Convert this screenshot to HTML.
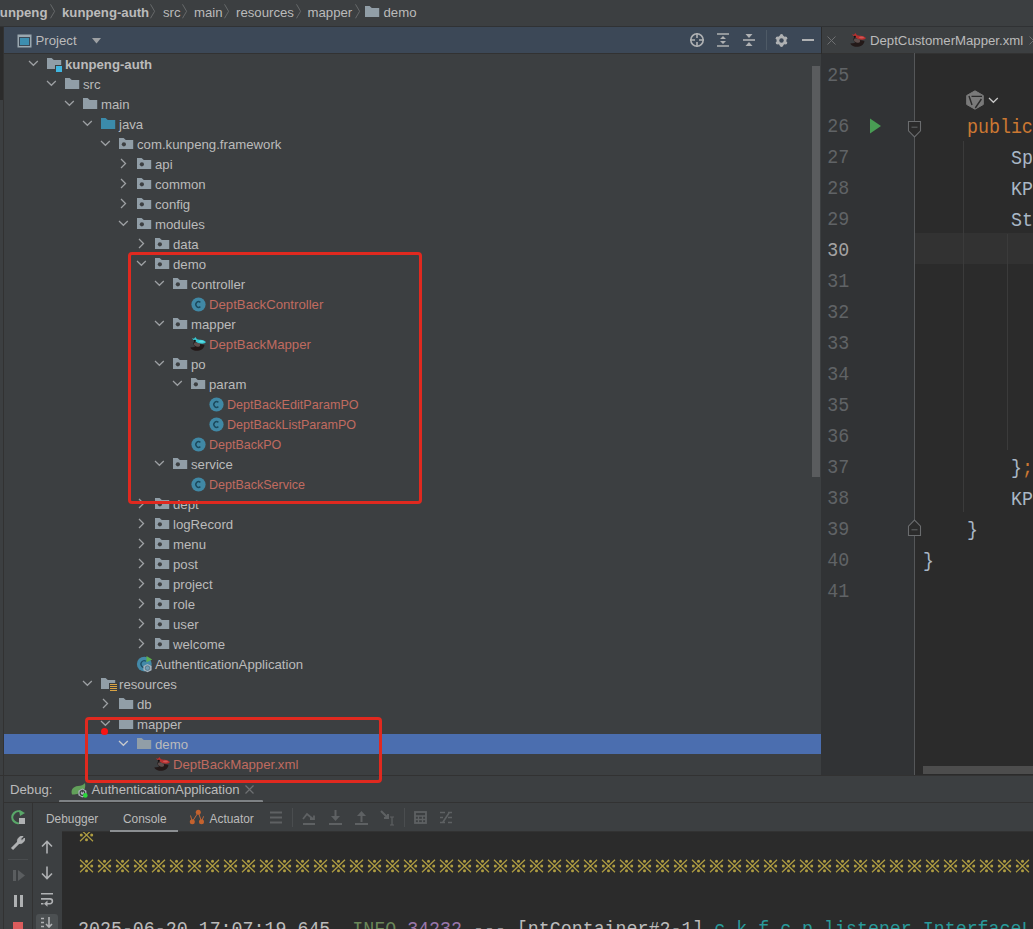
<!DOCTYPE html>
<html><head><meta charset="utf-8"><style>
html,body{margin:0;padding:0;width:1033px;height:929px;overflow:hidden;background:#3C3F41;position:relative;font-family:"Liberation Sans",sans-serif}
div{box-sizing:border-box}
.t{position:absolute;height:20px;line-height:20px;font-size:13.2px;white-space:nowrap}
.ln{position:absolute;left:827.3px;height:31px;line-height:31px;font-family:"Liberation Mono",monospace;font-size:18.3px;white-space:nowrap;transform:translateY(2.8px) scaleY(1.08)}
.code{position:absolute;height:31px;line-height:31px;font-family:"Liberation Mono",monospace;font-size:18.3px;color:#A9B7C6;white-space:pre;transform:translateY(3.3px) scaleY(1.08)}
.bc{position:absolute;top:-0.5px;height:26px;line-height:26px;font-size:13.2px;color:#BBBBBB;white-space:nowrap}
</style></head><body>
<!-- breadcrumb bar -->
<div style="position:absolute;left:0;top:0;width:1033px;height:26px;background:#3C3F41"></div>
<div style="position:absolute;left:0;top:26px;width:1033px;height:1px;background:#303234"></div>
<div class="bc" style="left:-7.5px;font-weight:bold">kunpeng</div>
<div class="bc" style="left:62px;font-weight:bold">kunpeng-auth</div>
<div class="bc" style="left:163px">src</div>
<div class="bc" style="left:194px">main</div>
<div class="bc" style="left:236px">resources</div>
<div class="bc" style="left:307.5px">mapper</div>
<div class="bc" style="left:383.5px">demo</div>
<svg style="position:absolute;left:49.5px;top:4px" width="6" height="15" viewBox="0 0 6 15"><path d="M0.5 0.3L4.6 7.3L0.5 14.3" fill="none" stroke="#67696B" stroke-width="1"/></svg>
<svg style="position:absolute;left:149.5px;top:4px" width="6" height="15" viewBox="0 0 6 15"><path d="M0.5 0.3L4.6 7.3L0.5 14.3" fill="none" stroke="#67696B" stroke-width="1"/></svg>
<svg style="position:absolute;left:182px;top:4px" width="6" height="15" viewBox="0 0 6 15"><path d="M0.5 0.3L4.6 7.3L0.5 14.3" fill="none" stroke="#67696B" stroke-width="1"/></svg>
<svg style="position:absolute;left:224px;top:4px" width="6" height="15" viewBox="0 0 6 15"><path d="M0.5 0.3L4.6 7.3L0.5 14.3" fill="none" stroke="#67696B" stroke-width="1"/></svg>
<svg style="position:absolute;left:295.5px;top:4px" width="6" height="15" viewBox="0 0 6 15"><path d="M0.5 0.3L4.6 7.3L0.5 14.3" fill="none" stroke="#67696B" stroke-width="1"/></svg>
<svg style="position:absolute;left:354.5px;top:4px" width="6" height="15" viewBox="0 0 6 15"><path d="M0.5 0.3L4.6 7.3L0.5 14.3" fill="none" stroke="#67696B" stroke-width="1"/></svg>
<svg style="position:absolute;left:365px;top:5.5px" width="16" height="13" viewBox="0 0 16 13"><path d="M0 0H4.6L6.8 2H14.2V11H0Z" fill="#919EA7"/></svg>
<!-- left stripe -->
<div style="position:absolute;left:0;top:27px;width:3px;height:73px;background:#2B2B2B"></div>
<div style="position:absolute;left:3px;top:27px;width:1px;height:902px;background:#323232"></div>
<!-- tool window -->
<div style="position:absolute;left:4px;top:27px;width:817px;height:26px;background:#3C4857"></div>
<div style="position:absolute;left:4px;top:53px;width:817px;height:1px;background:#323232"></div>
<div style="position:absolute;left:4px;top:54px;width:817px;height:721px;background:#3C3F41"></div>
<svg style="position:absolute;left:17px;top:34px" width="15" height="14" viewBox="0 0 15 14"><rect x="0.5" y="0.5" width="14" height="13" fill="#9AA7B0"/><rect x="2" y="3" width="11" height="9" fill="#3C4A58"/><rect x="3" y="4" width="9" height="7" fill="#3D8EB0"/></svg>
<div class="t" style="left:35.5px;top:31px;color:#BBBBBB">Project</div>
<svg style="position:absolute;left:92px;top:38px" width="9" height="6" viewBox="0 0 9 6"><path d="M0 0H9L4.5 5.5Z" fill="#9DA0A3"/></svg>
<svg style="position:absolute;left:689px;top:32px" width="16" height="16" viewBox="0 0 16 16"><circle cx="8" cy="8" r="6.2" fill="none" stroke="#AFB1B3" stroke-width="1.6"/><path d="M8 1V6M8 10V15M1 8H6M10 8H15" stroke="#AFB1B3" stroke-width="1.6"/></svg>
<svg style="position:absolute;left:716px;top:32px" width="14" height="16" viewBox="0 0 14 16"><path d="M1 2H13M1 14H13" stroke="#AFB1B3" stroke-width="1.6"/><path d="M4 7H10L7 4Z M4 9H10L7 12Z" fill="#AFB1B3"/></svg>
<svg style="position:absolute;left:742px;top:33px" width="14" height="14" viewBox="0 0 14 14"><path d="M1 7H13" stroke="#AFB1B3" stroke-width="1.6"/><path d="M3.5 1H10.5L7 5Z M3.5 13H10.5L7 9Z" fill="#AFB1B3"/></svg>
<div style="position:absolute;left:765.5px;top:30px;width:1px;height:20px;background:#4E5A66"></div>
<svg style="position:absolute;left:774px;top:32.9px" width="15" height="15" viewBox="0 0 15 15"><g transform="translate(7.5 7.5)"><circle r="4.9" fill="#AFB1B3"/><circle cx="0.00" cy="-4.70" r="1.7" fill="#AFB1B3"/><circle cx="4.07" cy="-2.35" r="1.7" fill="#AFB1B3"/><circle cx="4.07" cy="2.35" r="1.7" fill="#AFB1B3"/><circle cx="0.00" cy="4.70" r="1.7" fill="#AFB1B3"/><circle cx="-4.07" cy="2.35" r="1.7" fill="#AFB1B3"/><circle cx="-4.07" cy="-2.35" r="1.7" fill="#AFB1B3"/><circle r="2.2" fill="#3C4857"/></g></svg>
<div style="position:absolute;left:802px;top:38.5px;width:12px;height:2.5px;background:#AFB1B3"></div>
<svg style="position:absolute;left:28.1px;top:60px" width="11" height="7" viewBox="0 0 11 7"><path d="M1 1L5.4 5.3L9.8 1" fill="none" stroke="#9DA0A3" stroke-width="1.25"/></svg>
<svg style="position:absolute;left:47px;top:58px" width="16" height="13" viewBox="0 0 16 13"><path d="M0 0H4.6L6.8 2H14.2V11H0Z" fill="#919EA7"/></svg>
<div style="position:absolute;left:55px;top:65px;width:7px;height:7px;background:#3C3F41"></div>
<div style="position:absolute;left:56px;top:66px;width:6px;height:6px;background:#40B6E0"></div>
<div class="t" style="left:65px;top:55px;color:#BBBBBB;font-weight:bold">kunpeng-auth</div>
<svg style="position:absolute;left:46.1px;top:80px" width="11" height="7" viewBox="0 0 11 7"><path d="M1 1L5.4 5.3L9.8 1" fill="none" stroke="#9DA0A3" stroke-width="1.25"/></svg>
<svg style="position:absolute;left:65px;top:78px" width="16" height="13" viewBox="0 0 16 13"><path d="M0 0H4.6L6.8 2H14.2V11H0Z" fill="#919EA7"/></svg>
<div class="t" style="left:83px;top:75px;color:#BBBBBB;font-weight:normal">src</div>
<svg style="position:absolute;left:64.1px;top:100px" width="11" height="7" viewBox="0 0 11 7"><path d="M1 1L5.4 5.3L9.8 1" fill="none" stroke="#9DA0A3" stroke-width="1.25"/></svg>
<svg style="position:absolute;left:83px;top:98px" width="16" height="13" viewBox="0 0 16 13"><path d="M0 0H4.6L6.8 2H14.2V11H0Z" fill="#919EA7"/></svg>
<div class="t" style="left:101px;top:95px;color:#BBBBBB;font-weight:normal">main</div>
<svg style="position:absolute;left:82.1px;top:120px" width="11" height="7" viewBox="0 0 11 7"><path d="M1 1L5.4 5.3L9.8 1" fill="none" stroke="#9DA0A3" stroke-width="1.25"/></svg>
<svg style="position:absolute;left:101px;top:118px" width="16" height="13" viewBox="0 0 16 13"><path d="M0 0H4.6L6.8 2H14.2V11H0Z" fill="#3B8BAB"/></svg>
<div class="t" style="left:119px;top:115px;color:#BBBBBB;font-weight:normal">java</div>
<svg style="position:absolute;left:100.1px;top:140px" width="11" height="7" viewBox="0 0 11 7"><path d="M1 1L5.4 5.3L9.8 1" fill="none" stroke="#9DA0A3" stroke-width="1.25"/></svg>
<svg style="position:absolute;left:119px;top:138px" width="16" height="13" viewBox="0 0 16 13"><path d="M0 0H4.6L6.8 2H14.2V11H0Z" fill="#919EA7"/><circle cx="4.9" cy="6.3" r="2.1" fill="#3C3F41"/></svg>
<div class="t" style="left:137px;top:135px;color:#BBBBBB;font-weight:normal">com.kunpeng.framework</div>
<svg style="position:absolute;left:119.5px;top:157.8px" width="7" height="11" viewBox="0 0 7 11"><path d="M1 1L5.5 5.5L1 10" fill="none" stroke="#9DA0A3" stroke-width="1.3"/></svg>
<svg style="position:absolute;left:137px;top:158px" width="16" height="13" viewBox="0 0 16 13"><path d="M0 0H4.6L6.8 2H14.2V11H0Z" fill="#919EA7"/><circle cx="4.9" cy="6.3" r="2.1" fill="#3C3F41"/></svg>
<div class="t" style="left:155px;top:155px;color:#BBBBBB;font-weight:normal">api</div>
<svg style="position:absolute;left:119.5px;top:177.8px" width="7" height="11" viewBox="0 0 7 11"><path d="M1 1L5.5 5.5L1 10" fill="none" stroke="#9DA0A3" stroke-width="1.3"/></svg>
<svg style="position:absolute;left:137px;top:178px" width="16" height="13" viewBox="0 0 16 13"><path d="M0 0H4.6L6.8 2H14.2V11H0Z" fill="#919EA7"/><circle cx="4.9" cy="6.3" r="2.1" fill="#3C3F41"/></svg>
<div class="t" style="left:155px;top:175px;color:#BBBBBB;font-weight:normal">common</div>
<svg style="position:absolute;left:119.5px;top:197.8px" width="7" height="11" viewBox="0 0 7 11"><path d="M1 1L5.5 5.5L1 10" fill="none" stroke="#9DA0A3" stroke-width="1.3"/></svg>
<svg style="position:absolute;left:137px;top:198px" width="16" height="13" viewBox="0 0 16 13"><path d="M0 0H4.6L6.8 2H14.2V11H0Z" fill="#919EA7"/><circle cx="4.9" cy="6.3" r="2.1" fill="#3C3F41"/></svg>
<div class="t" style="left:155px;top:195px;color:#BBBBBB;font-weight:normal">config</div>
<svg style="position:absolute;left:118.1px;top:220px" width="11" height="7" viewBox="0 0 11 7"><path d="M1 1L5.4 5.3L9.8 1" fill="none" stroke="#9DA0A3" stroke-width="1.25"/></svg>
<svg style="position:absolute;left:137px;top:218px" width="16" height="13" viewBox="0 0 16 13"><path d="M0 0H4.6L6.8 2H14.2V11H0Z" fill="#919EA7"/><circle cx="4.9" cy="6.3" r="2.1" fill="#3C3F41"/></svg>
<div class="t" style="left:155px;top:215px;color:#BBBBBB;font-weight:normal">modules</div>
<svg style="position:absolute;left:137.5px;top:237.8px" width="7" height="11" viewBox="0 0 7 11"><path d="M1 1L5.5 5.5L1 10" fill="none" stroke="#9DA0A3" stroke-width="1.3"/></svg>
<svg style="position:absolute;left:155px;top:238px" width="16" height="13" viewBox="0 0 16 13"><path d="M0 0H4.6L6.8 2H14.2V11H0Z" fill="#919EA7"/><circle cx="4.9" cy="6.3" r="2.1" fill="#3C3F41"/></svg>
<div class="t" style="left:173px;top:235px;color:#BBBBBB;font-weight:normal">data</div>
<svg style="position:absolute;left:136.1px;top:260px" width="11" height="7" viewBox="0 0 11 7"><path d="M1 1L5.4 5.3L9.8 1" fill="none" stroke="#9DA0A3" stroke-width="1.25"/></svg>
<svg style="position:absolute;left:155px;top:258px" width="16" height="13" viewBox="0 0 16 13"><path d="M0 0H4.6L6.8 2H14.2V11H0Z" fill="#919EA7"/><circle cx="4.9" cy="6.3" r="2.1" fill="#3C3F41"/></svg>
<div class="t" style="left:173px;top:255px;color:#BBBBBB;font-weight:normal">demo</div>
<svg style="position:absolute;left:154.1px;top:280px" width="11" height="7" viewBox="0 0 11 7"><path d="M1 1L5.4 5.3L9.8 1" fill="none" stroke="#9DA0A3" stroke-width="1.25"/></svg>
<svg style="position:absolute;left:173px;top:278px" width="16" height="13" viewBox="0 0 16 13"><path d="M0 0H4.6L6.8 2H14.2V11H0Z" fill="#919EA7"/><circle cx="4.9" cy="6.3" r="2.1" fill="#3C3F41"/></svg>
<div class="t" style="left:191px;top:275px;color:#BBBBBB;font-weight:normal">controller</div>
<svg style="position:absolute;left:190.5px;top:296.5px" width="15" height="15" viewBox="0 0 15 15"><circle cx="7.5" cy="7.5" r="7.1" fill="#4088A5"/><path d="M9.4 5.3A2.8 2.8 0 1 0 9.4 9.7" fill="none" stroke="#1B4A5E" stroke-width="1.5"/></svg>
<div class="t" style="left:209px;top:295px;color:#C06B60;font-weight:normal">DeptBackController</div>
<svg style="position:absolute;left:154.1px;top:320px" width="11" height="7" viewBox="0 0 11 7"><path d="M1 1L5.4 5.3L9.8 1" fill="none" stroke="#9DA0A3" stroke-width="1.25"/></svg>
<svg style="position:absolute;left:173px;top:318px" width="16" height="13" viewBox="0 0 16 13"><path d="M0 0H4.6L6.8 2H14.2V11H0Z" fill="#919EA7"/><circle cx="4.9" cy="6.3" r="2.1" fill="#3C3F41"/></svg>
<div class="t" style="left:191px;top:315px;color:#BBBBBB;font-weight:normal">mapper</div>
<svg style="position:absolute;left:189px;top:334px" width="18" height="20" viewBox="0 0 18 20"><path d="M1.2 13.4C2.5 15.5 5 16.9 9 16.8C13 16.5 15.4 13.5 15.4 11C13 10.5 10.5 10 8.5 9C7 8.5 5.5 8 4.5 8.3C4 10 4.8 11.5 6.5 12.5C5 13 3 13.5 1.2 13.4Z" fill="#231918"/><ellipse cx="8" cy="10.6" rx="3.2" ry="1.9" transform="rotate(20 8 10.6)" fill="#5E4E4C"/><path d="M2.8 4.2L5 4.8L6.3 2.9L8 5.2C11 5.8 15.5 5.8 16.8 8C16.5 9.8 13 10 10 9.2C7.5 8.5 5 6.5 2.8 4.2Z" fill="#36C9D3"/><ellipse cx="12.5" cy="7.6" rx="2.5" ry="1" fill="#7FE8EE" opacity="0.6"/><circle cx="5.8" cy="6.8" r="1.1" fill="#111"/></svg>
<div class="t" style="left:209px;top:335px;color:#C06B60;font-weight:normal">DeptBackMapper</div>
<svg style="position:absolute;left:154.1px;top:360px" width="11" height="7" viewBox="0 0 11 7"><path d="M1 1L5.4 5.3L9.8 1" fill="none" stroke="#9DA0A3" stroke-width="1.25"/></svg>
<svg style="position:absolute;left:173px;top:358px" width="16" height="13" viewBox="0 0 16 13"><path d="M0 0H4.6L6.8 2H14.2V11H0Z" fill="#919EA7"/><circle cx="4.9" cy="6.3" r="2.1" fill="#3C3F41"/></svg>
<div class="t" style="left:191px;top:355px;color:#BBBBBB;font-weight:normal">po</div>
<svg style="position:absolute;left:172.1px;top:380px" width="11" height="7" viewBox="0 0 11 7"><path d="M1 1L5.4 5.3L9.8 1" fill="none" stroke="#9DA0A3" stroke-width="1.25"/></svg>
<svg style="position:absolute;left:191px;top:378px" width="16" height="13" viewBox="0 0 16 13"><path d="M0 0H4.6L6.8 2H14.2V11H0Z" fill="#919EA7"/><circle cx="4.9" cy="6.3" r="2.1" fill="#3C3F41"/></svg>
<div class="t" style="left:209px;top:375px;color:#BBBBBB;font-weight:normal">param</div>
<svg style="position:absolute;left:208.5px;top:396.5px" width="15" height="15" viewBox="0 0 15 15"><circle cx="7.5" cy="7.5" r="7.1" fill="#4088A5"/><path d="M9.4 5.3A2.8 2.8 0 1 0 9.4 9.7" fill="none" stroke="#1B4A5E" stroke-width="1.5"/></svg>
<div class="t" style="left:227px;top:395px;color:#C06B60;font-weight:normal;transform:scaleX(0.955);transform-origin:0 0">DeptBackEditParamPO</div>
<svg style="position:absolute;left:208.5px;top:416.5px" width="15" height="15" viewBox="0 0 15 15"><circle cx="7.5" cy="7.5" r="7.1" fill="#4088A5"/><path d="M9.4 5.3A2.8 2.8 0 1 0 9.4 9.7" fill="none" stroke="#1B4A5E" stroke-width="1.5"/></svg>
<div class="t" style="left:227px;top:415px;color:#C06B60;font-weight:normal;transform:scaleX(0.952);transform-origin:0 0">DeptBackListParamPO</div>
<svg style="position:absolute;left:190.5px;top:436.5px" width="15" height="15" viewBox="0 0 15 15"><circle cx="7.5" cy="7.5" r="7.1" fill="#4088A5"/><path d="M9.4 5.3A2.8 2.8 0 1 0 9.4 9.7" fill="none" stroke="#1B4A5E" stroke-width="1.5"/></svg>
<div class="t" style="left:209px;top:435px;color:#C06B60;font-weight:normal;transform:scaleX(0.949);transform-origin:0 0">DeptBackPO</div>
<svg style="position:absolute;left:154.1px;top:460px" width="11" height="7" viewBox="0 0 11 7"><path d="M1 1L5.4 5.3L9.8 1" fill="none" stroke="#9DA0A3" stroke-width="1.25"/></svg>
<svg style="position:absolute;left:173px;top:458px" width="16" height="13" viewBox="0 0 16 13"><path d="M0 0H4.6L6.8 2H14.2V11H0Z" fill="#919EA7"/><circle cx="4.9" cy="6.3" r="2.1" fill="#3C3F41"/></svg>
<div class="t" style="left:191px;top:455px;color:#BBBBBB;font-weight:normal">service</div>
<svg style="position:absolute;left:190.5px;top:476.5px" width="15" height="15" viewBox="0 0 15 15"><circle cx="7.5" cy="7.5" r="7.1" fill="#4088A5"/><path d="M9.4 5.3A2.8 2.8 0 1 0 9.4 9.7" fill="none" stroke="#1B4A5E" stroke-width="1.5"/></svg>
<div class="t" style="left:209px;top:475px;color:#C06B60;font-weight:normal;transform:scaleX(0.949);transform-origin:0 0">DeptBackService</div>
<svg style="position:absolute;left:137.5px;top:497.8px" width="7" height="11" viewBox="0 0 7 11"><path d="M1 1L5.5 5.5L1 10" fill="none" stroke="#9DA0A3" stroke-width="1.3"/></svg>
<svg style="position:absolute;left:155px;top:498px" width="16" height="13" viewBox="0 0 16 13"><path d="M0 0H4.6L6.8 2H14.2V11H0Z" fill="#919EA7"/><circle cx="4.9" cy="6.3" r="2.1" fill="#3C3F41"/></svg>
<div class="t" style="left:173px;top:495px;color:#BBBBBB;font-weight:normal">dept</div>
<svg style="position:absolute;left:137.5px;top:517.8px" width="7" height="11" viewBox="0 0 7 11"><path d="M1 1L5.5 5.5L1 10" fill="none" stroke="#9DA0A3" stroke-width="1.3"/></svg>
<svg style="position:absolute;left:155px;top:518px" width="16" height="13" viewBox="0 0 16 13"><path d="M0 0H4.6L6.8 2H14.2V11H0Z" fill="#919EA7"/><circle cx="4.9" cy="6.3" r="2.1" fill="#3C3F41"/></svg>
<div class="t" style="left:173px;top:515px;color:#BBBBBB;font-weight:normal">logRecord</div>
<svg style="position:absolute;left:137.5px;top:537.8px" width="7" height="11" viewBox="0 0 7 11"><path d="M1 1L5.5 5.5L1 10" fill="none" stroke="#9DA0A3" stroke-width="1.3"/></svg>
<svg style="position:absolute;left:155px;top:538px" width="16" height="13" viewBox="0 0 16 13"><path d="M0 0H4.6L6.8 2H14.2V11H0Z" fill="#919EA7"/><circle cx="4.9" cy="6.3" r="2.1" fill="#3C3F41"/></svg>
<div class="t" style="left:173px;top:535px;color:#BBBBBB;font-weight:normal">menu</div>
<svg style="position:absolute;left:137.5px;top:557.8px" width="7" height="11" viewBox="0 0 7 11"><path d="M1 1L5.5 5.5L1 10" fill="none" stroke="#9DA0A3" stroke-width="1.3"/></svg>
<svg style="position:absolute;left:155px;top:558px" width="16" height="13" viewBox="0 0 16 13"><path d="M0 0H4.6L6.8 2H14.2V11H0Z" fill="#919EA7"/><circle cx="4.9" cy="6.3" r="2.1" fill="#3C3F41"/></svg>
<div class="t" style="left:173px;top:555px;color:#BBBBBB;font-weight:normal">post</div>
<svg style="position:absolute;left:137.5px;top:577.8px" width="7" height="11" viewBox="0 0 7 11"><path d="M1 1L5.5 5.5L1 10" fill="none" stroke="#9DA0A3" stroke-width="1.3"/></svg>
<svg style="position:absolute;left:155px;top:578px" width="16" height="13" viewBox="0 0 16 13"><path d="M0 0H4.6L6.8 2H14.2V11H0Z" fill="#919EA7"/><circle cx="4.9" cy="6.3" r="2.1" fill="#3C3F41"/></svg>
<div class="t" style="left:173px;top:575px;color:#BBBBBB;font-weight:normal">project</div>
<svg style="position:absolute;left:137.5px;top:597.8px" width="7" height="11" viewBox="0 0 7 11"><path d="M1 1L5.5 5.5L1 10" fill="none" stroke="#9DA0A3" stroke-width="1.3"/></svg>
<svg style="position:absolute;left:155px;top:598px" width="16" height="13" viewBox="0 0 16 13"><path d="M0 0H4.6L6.8 2H14.2V11H0Z" fill="#919EA7"/><circle cx="4.9" cy="6.3" r="2.1" fill="#3C3F41"/></svg>
<div class="t" style="left:173px;top:595px;color:#BBBBBB;font-weight:normal">role</div>
<svg style="position:absolute;left:137.5px;top:617.8px" width="7" height="11" viewBox="0 0 7 11"><path d="M1 1L5.5 5.5L1 10" fill="none" stroke="#9DA0A3" stroke-width="1.3"/></svg>
<svg style="position:absolute;left:155px;top:618px" width="16" height="13" viewBox="0 0 16 13"><path d="M0 0H4.6L6.8 2H14.2V11H0Z" fill="#919EA7"/><circle cx="4.9" cy="6.3" r="2.1" fill="#3C3F41"/></svg>
<div class="t" style="left:173px;top:615px;color:#BBBBBB;font-weight:normal">user</div>
<svg style="position:absolute;left:137.5px;top:637.8px" width="7" height="11" viewBox="0 0 7 11"><path d="M1 1L5.5 5.5L1 10" fill="none" stroke="#9DA0A3" stroke-width="1.3"/></svg>
<svg style="position:absolute;left:155px;top:638px" width="16" height="13" viewBox="0 0 16 13"><path d="M0 0H4.6L6.8 2H14.2V11H0Z" fill="#919EA7"/><circle cx="4.9" cy="6.3" r="2.1" fill="#3C3F41"/></svg>
<div class="t" style="left:173px;top:635px;color:#BBBBBB;font-weight:normal">welcome</div>
<svg style="position:absolute;left:132px;top:652px" width="26" height="24" viewBox="0 0 26 24"><circle cx="12.3" cy="12.1" r="7.4" fill="#4389A8"/><path d="M14 9.3A3.3 3.3 0 1 0 14 14.9" fill="none" stroke="#1D4F66" stroke-width="1.3"/><path d="M14.5 3.9L20.2 7.5L14.5 10.3Z" fill="#5DB04E"/><path d="M15.5 11.9L19.6 14V18.3L15.5 20.3L11.4 18.3V14Z" fill="#A5B3BF"/><circle cx="15.5" cy="16.1" r="2.3" fill="#6F9DB5" stroke="#4E6E80" stroke-width="0.8"/></svg>
<div class="t" style="left:155px;top:655px;color:#BBBBBB;font-weight:normal">AuthenticationApplication</div>
<svg style="position:absolute;left:82.1px;top:680px" width="11" height="7" viewBox="0 0 11 7"><path d="M1 1L5.4 5.3L9.8 1" fill="none" stroke="#9DA0A3" stroke-width="1.25"/></svg>
<svg style="position:absolute;left:101px;top:678px" width="16" height="13" viewBox="0 0 16 13"><path d="M0 0H4.6L6.8 2H14.2V11H0Z" fill="#919EA7"/></svg>
<div style="position:absolute;left:109px;top:683px;width:8px;height:9px;background:#3C3F41"></div>
<div style="position:absolute;left:110px;top:684px;width:7px;height:1px;background:#D9A343"></div>
<div style="position:absolute;left:110px;top:686px;width:7px;height:1px;background:#D9A343"></div>
<div style="position:absolute;left:110px;top:688px;width:7px;height:1px;background:#D9A343"></div>
<div style="position:absolute;left:110px;top:690px;width:7px;height:1px;background:#D9A343"></div>
<div class="t" style="left:119px;top:675px;color:#BBBBBB;font-weight:normal">resources</div>
<svg style="position:absolute;left:101.5px;top:697.8px" width="7" height="11" viewBox="0 0 7 11"><path d="M1 1L5.5 5.5L1 10" fill="none" stroke="#9DA0A3" stroke-width="1.3"/></svg>
<svg style="position:absolute;left:119px;top:698px" width="16" height="13" viewBox="0 0 16 13"><path d="M0 0H4.6L6.8 2H14.2V11H0Z" fill="#919EA7"/></svg>
<div class="t" style="left:137px;top:695px;color:#BBBBBB;font-weight:normal">db</div>
<svg style="position:absolute;left:100.1px;top:720px" width="11" height="7" viewBox="0 0 11 7"><path d="M1 1L5.4 5.3L9.8 1" fill="none" stroke="#9DA0A3" stroke-width="1.25"/></svg>
<svg style="position:absolute;left:119px;top:718px" width="16" height="13" viewBox="0 0 16 13"><path d="M0 0H4.6L6.8 2H14.2V11H0Z" fill="#919EA7"/></svg>
<div class="t" style="left:137px;top:715px;color:#BBBBBB;font-weight:normal">mapper</div>
<div style="position:absolute;left:4px;top:734px;width:817px;height:20px;background:#4B6EAF"></div>
<svg style="position:absolute;left:118.1px;top:740px" width="11" height="7" viewBox="0 0 11 7"><path d="M1 1L5.4 5.3L9.8 1" fill="none" stroke="#C8CACC" stroke-width="1.25"/></svg>
<svg style="position:absolute;left:137px;top:738px" width="16" height="13" viewBox="0 0 16 13"><path d="M0 0H4.6L6.8 2H14.2V11H0Z" fill="#919EA7"/></svg>
<div class="t" style="left:155px;top:735px;color:#BBBBBB;font-weight:normal">demo</div>
<svg style="position:absolute;left:153px;top:754px" width="18" height="20" viewBox="0 0 18 20"><path d="M1.2 13.4C2.5 15.5 5 16.9 9 16.8C13 16.5 15.4 13.5 15.4 11C13 10.5 10.5 10 8.5 9C7 8.5 5.5 8 4.5 8.3C4 10 4.8 11.5 6.5 12.5C5 13 3 13.5 1.2 13.4Z" fill="#231918"/><ellipse cx="8" cy="10.6" rx="3.2" ry="1.9" transform="rotate(20 8 10.6)" fill="#5E4E4C"/><path d="M2.8 4.2L5 4.8L6.3 2.9L8 5.2C11 5.8 15.5 5.8 16.8 8C16.5 9.8 13 10 10 9.2C7.5 8.5 5 6.5 2.8 4.2Z" fill="#B8302F"/><ellipse cx="12.5" cy="7.6" rx="2.5" ry="1" fill="#E07070" opacity="0.6"/><circle cx="5.8" cy="6.8" r="1.1" fill="#111"/></svg>
<div class="t" style="left:173px;top:755px;color:#C06B60;font-weight:normal">DeptBackMapper.xml</div>
<!-- tree scrollbar -->
<div style="position:absolute;left:812px;top:66px;width:8px;height:411px;background:#5A5C5E"></div>
<!-- editor -->
<div style="position:absolute;left:821px;top:27px;width:1px;height:748px;background:#2B2B2B"></div>
<div style="position:absolute;left:822px;top:27px;width:211px;height:26px;background:#3C3F41"></div>
<div style="position:absolute;left:822px;top:53px;width:211px;height:1px;background:#323232"></div>
<div style="position:absolute;left:821px;top:54px;width:93px;height:721px;background:#313335"></div>
<div style="position:absolute;left:914px;top:54px;width:119px;height:721px;background:#2B2B2B"></div>
<svg style="position:absolute;left:827px;top:36px" width="9" height="9" viewBox="0 0 9 9"><path d="M0.5 0.5L8.5 8.5M8.5 0.5L0.5 8.5" stroke="#6E7072" stroke-width="1"/></svg>
<svg style="position:absolute;left:849px;top:30px" width="18" height="20" viewBox="0 0 18 20"><path d="M1.2 13.4C2.5 15.5 5 16.9 9 16.8C13 16.5 15.4 13.5 15.4 11C13 10.5 10.5 10 8.5 9C7 8.5 5.5 8 4.5 8.3C4 10 4.8 11.5 6.5 12.5C5 13 3 13.5 1.2 13.4Z" fill="#231918"/><ellipse cx="8" cy="10.6" rx="3.2" ry="1.9" transform="rotate(20 8 10.6)" fill="#5E4E4C"/><path d="M2.8 4.2L5 4.8L6.3 2.9L8 5.2C11 5.8 15.5 5.8 16.8 8C16.5 9.8 13 10 10 9.2C7.5 8.5 5 6.5 2.8 4.2Z" fill="#B8302F"/><ellipse cx="12.5" cy="7.6" rx="2.5" ry="1" fill="#E07070" opacity="0.6"/><circle cx="5.8" cy="6.8" r="1.1" fill="#111"/></svg>
<div class="t" style="left:870px;top:31px;color:#BBBBBB">DeptCustomerMapper.xml</div>
<svg style="position:absolute;left:1029px;top:36px" width="9" height="9" viewBox="0 0 9 9"><path d="M0.5 0.5L8.5 8.5M8.5 0.5L0.5 8.5" stroke="#6E7072" stroke-width="1"/></svg>
<div style="position:absolute;left:914px;top:233px;width:119px;height:31px;background:#323232"></div>
<div class="ln" style="top:58px;color:#606366">25</div>
<div class="ln" style="top:109px;color:#606366">26</div>
<div class="ln" style="top:140px;color:#606366">27</div>
<div class="ln" style="top:171px;color:#606366">28</div>
<div class="ln" style="top:202px;color:#606366">29</div>
<div class="ln" style="top:233px;color:#A4A3A3">30</div>
<div class="ln" style="top:264px;color:#606366">31</div>
<div class="ln" style="top:295px;color:#606366">32</div>
<div class="ln" style="top:326px;color:#606366">33</div>
<div class="ln" style="top:357px;color:#606366">34</div>
<div class="ln" style="top:388px;color:#606366">35</div>
<div class="ln" style="top:419px;color:#606366">36</div>
<div class="ln" style="top:450px;color:#606366">37</div>
<div class="ln" style="top:481px;color:#606366">38</div>
<div class="ln" style="top:512px;color:#606366">39</div>
<div class="ln" style="top:543px;color:#606366">40</div>
<div class="ln" style="top:574px;color:#606366">41</div>
<div style="position:absolute;left:913.5px;top:53px;width:1px;height:722px;background:#555759"></div>
<div style="position:absolute;left:963px;top:141px;width:1px;height:371px;background:#3B3B3B"></div>
<div style="position:absolute;left:1007px;top:234px;width:1px;height:216px;background:#3B3B3B"></div>
<div class="code" style="left:967px;top:109px"><span style="color:#CC7832">public</span></div>
<div class="code" style="left:1011px;top:140px">Sp</div>
<div class="code" style="left:1011px;top:171px">KP</div>
<div class="code" style="left:1011px;top:202px">St</div>
<div class="code" style="left:1011px;top:450px">}<span style="color:#CC7832">;</span></div>
<div class="code" style="left:1011px;top:481px">KP</div>
<div class="code" style="left:967px;top:512px">}</div>
<div class="code" style="left:923px;top:543px">}</div>
<svg style="position:absolute;left:869px;top:118px" width="13" height="16" viewBox="0 0 13 16"><path d="M1 0.5L12 8L1 15.5Z" fill="#499C54"/></svg>
<svg style="position:absolute;left:907px;top:119.5px" width="15" height="18" viewBox="0 0 15 18"><path d="M1.5 1.5H13.5V10.8L7.5 17L1.5 10.8Z" fill="#2B2B2B" stroke="#6A6C6E" stroke-width="1.1"/><path d="M4.5 7.2H10.5" stroke="#6A6C6E" stroke-width="0.9"/></svg>
<svg style="position:absolute;left:907px;top:519px" width="15" height="18" viewBox="0 0 15 18"><path d="M1.5 16.5H13.5V7.2L7.5 1L1.5 7.2Z" fill="#2B2B2B" stroke="#6A6C6E" stroke-width="1.1"/><path d="M4.5 10.8H10.5" stroke="#6A6C6E" stroke-width="0.9"/></svg>
<svg style="position:absolute;left:965px;top:90px" width="20" height="20" viewBox="0 0 20 20"><path d="M10 0.8L18.3 5.5V14.5L10 19.2L1.7 14.5V5.5Z" fill="#7A7A7A" stroke="#7A7A7A" stroke-width="1" stroke-linejoin="round"/><path d="M6.5 6.4H17M4 6L7 15M16.4 9L10.3 18" fill="none" stroke="#2B2B2B" stroke-width="1.4"/></svg>
<svg style="position:absolute;left:987.5px;top:96.8px" width="11" height="7" viewBox="0 0 11 7"><path d="M1 1L5.4 5.3L9.8 1" fill="none" stroke="#C8C8C8" stroke-width="1.25"/></svg>
<div style="position:absolute;left:923px;top:766px;width:110px;height:8px;background:#4D4D4D"></div>
<!-- bottom debug -->
<div style="position:absolute;left:0;top:775px;width:1033px;height:1px;background:#323232"></div>
<div style="position:absolute;left:4px;top:776px;width:1029px;height:26px;background:#3C3F41"></div>
<div class="t" style="left:10px;top:780px;color:#BBBBBB">Debug:</div>
<svg style="position:absolute;left:66px;top:778px" width="30" height="24" viewBox="0 0 30 24"><path d="M6 16.5C4.5 12 7 8.5 12 8C15 7.7 17.5 7 19 5C19.8 9 19 12 16 14C13 16 9 16.5 6 16.5Z" fill="#62A05A"/><path d="M20.4 12.7V17.3L16.4 19.6L12.4 17.3V12.7L16.4 10.4Z" fill="#AEB5BE"/><circle cx="16.4" cy="15" r="2.3" fill="none" stroke="#3C3F41" stroke-width="1.2"/><path d="M16.4 11.8V14.5" stroke="#3C3F41" stroke-width="1.2"/><circle cx="19.3" cy="17.4" r="2.3" fill="#2BD83B"/></svg>
<div class="t" style="left:91.5px;top:780px;color:#BBBBBB">AuthenticationApplication</div>
<svg style="position:absolute;left:244.5px;top:785px" width="9" height="9" viewBox="0 0 9 9"><path d="M0.5 0.5L8.5 8.5M8.5 0.5L0.5 8.5" stroke="#6E7072" stroke-width="1.2"/></svg>
<div style="position:absolute;left:59px;top:800px;width:204px;height:3px;background:#7E8285;border-radius:1px"></div>
<div style="position:absolute;left:4px;top:802px;width:1029px;height:1px;background:#323232"></div>
<div style="position:absolute;left:4px;top:803px;width:1029px;height:28px;background:#3C3F41"></div>
<div style="position:absolute;left:32px;top:803px;width:1px;height:126px;background:#323232"></div>
<div style="position:absolute;left:33px;top:830.5px;width:1000px;height:1px;background:#323232"></div>
<div class="t" style="left:46px;top:808.5px;color:#BBBBBB;font-size:11.9px">Debugger</div>
<div class="t" style="left:123px;top:808.5px;color:#BBBBBB;font-size:11.9px">Console</div>
<div style="position:absolute;left:110px;top:829.5px;width:68px;height:2.5px;background:#8C8F92"></div>
<svg style="position:absolute;left:185px;top:805px" width="25" height="25" viewBox="0 0 25 25"><g stroke="#C0673A" stroke-width="1" fill="none"><path d="M7.3 16.7L13.3 7.3L16.5 16.7M7.3 16.7L5.5 10.5M16.5 16.7L18.6 11.3"/></g><g fill="#C4622E"><circle cx="13.3" cy="7.3" r="2.5"/><circle cx="7.3" cy="16.7" r="2.5"/><circle cx="16.5" cy="16.7" r="2.5"/></g></svg>
<div class="t" style="left:209.5px;top:808.5px;color:#BBBBBB;font-size:11.9px">Actuator</div>
<svg style="position:absolute;left:270px;top:811px" width="12" height="13" viewBox="0 0 12 13"><path d="M0 1.5H12M0 6.5H12M0 11.5H12" stroke="#5E6163" stroke-width="2"/></svg>
<div style="position:absolute;left:292px;top:808px;width:1px;height:19px;background:#4A4D4F"></div>
<div style="position:absolute;left:403.5px;top:808px;width:1px;height:19px;background:#4A4D4F"></div>
<svg style="position:absolute;left:302px;top:810px" width="14" height="15" viewBox="0 0 14 15"><path d="M1 14H13" stroke="#5E6163" stroke-width="2"/><path d="M1 9L5 4L11 9M8 9H12V5.5" fill="none" stroke="#5E6163" stroke-width="1.8"/></svg>
<svg style="position:absolute;left:329px;top:810px" width="13" height="15" viewBox="0 0 13 15"><path d="M0 14H13" stroke="#5E6163" stroke-width="2"/><path d="M6.5 0V9" stroke="#5E6163" stroke-width="2"/><path d="M2 6H11L6.5 11Z" fill="#5E6163"/></svg>
<svg style="position:absolute;left:355px;top:810px" width="13" height="15" viewBox="0 0 13 15"><path d="M0 14H13" stroke="#5E6163" stroke-width="2"/><path d="M6.5 4V12" stroke="#5E6163" stroke-width="2"/><path d="M2 6H11L6.5 1Z" fill="#5E6163"/></svg>
<svg style="position:absolute;left:380px;top:810px" width="15" height="16" viewBox="0 0 15 16"><path d="M1 1L8 8M4 8H8V4" fill="none" stroke="#5E6163" stroke-width="2"/><path d="M10 7H14M12 7V15M10 15H14" stroke="#5E6163" stroke-width="1.2"/></svg>
<svg style="position:absolute;left:414px;top:811px" width="13" height="13" viewBox="0 0 13 13"><rect x="1" y="1" width="11" height="11" fill="none" stroke="#5E6163" stroke-width="1.8"/><path d="M1 5H12M4.5 5V12M8.5 5V12M1 8.5H12" stroke="#5E6163" stroke-width="1.3"/></svg>
<svg style="position:absolute;left:440px;top:811px" width="12" height="13" viewBox="0 0 12 13"><path d="M0 1.5H5M8 1.5H12M0 6.5H3M8 6.5H12M0 11.5H5M8 11.5H12M3 11L9 2" stroke="#5E6163" stroke-width="1.6"/></svg>
<svg style="position:absolute;left:11px;top:809px" width="16" height="16" viewBox="0 0 16 16"><path d="M11 3.5A6 6 0 1 0 11 13" fill="none" stroke="#59A869" stroke-width="2.2"/><path d="M8 1L14 4L9 7Z" fill="#59A869"/><rect x="8" y="9" width="6" height="6" fill="#AFB1B3"/></svg>
<svg style="position:absolute;left:10px;top:834px" width="17" height="17" viewBox="0 0 17 17"><path d="M2 15L9 8" stroke="#AFB1B3" stroke-width="3"/><path d="M8 9A4.5 4.5 0 0 1 13 2.5L10.5 5L12 6.5L14.5 4A4.5 4.5 0 0 1 8 9Z" fill="#AFB1B3" stroke="#AFB1B3" stroke-width="1"/></svg>
<div style="position:absolute;left:8px;top:859px;width:20px;height:1px;background:#4A4D4F"></div>
<svg style="position:absolute;left:13px;top:870px" width="12" height="11" viewBox="0 0 12 11"><rect x="0" y="0" width="3" height="11" fill="#5A5D5F"/><path d="M5 0L12 5.5L5 11Z" fill="#5A5D5F"/></svg>
<svg style="position:absolute;left:13.5px;top:895px" width="9" height="12" viewBox="0 0 9 12"><rect x="0" y="0" width="3" height="12" fill="#AFB1B3"/><rect x="6" y="0" width="3" height="12" fill="#AFB1B3"/></svg>
<div style="position:absolute;left:13px;top:922px;width:10px;height:10px;background:#DB5C5C"></div>
<div style="position:absolute;left:33px;top:831px;width:29px;height:98px;background:#3C3F41"></div>
<svg style="position:absolute;left:41px;top:840px" width="12" height="14" viewBox="0 0 12 14"><path d="M6 1.5V13.5M1 6.5L6 1.5L11 6.5" fill="none" stroke="#AFB1B3" stroke-width="1.6"/></svg>
<svg style="position:absolute;left:41px;top:866px" width="12" height="14" viewBox="0 0 12 14"><path d="M6 0.5V12.5M1 7.5L6 12.5L11 7.5" fill="none" stroke="#AFB1B3" stroke-width="1.6"/></svg>
<svg style="position:absolute;left:40px;top:892px" width="14" height="15" viewBox="0 0 14 15"><path d="M1 1.7H13M1 11.7H3.5M1 6.9H10A2.4 2.4 0 0 1 10 11.7H7" fill="none" stroke="#AFB1B3" stroke-width="1.6"/><path d="M7.5 8.6V14.8L4 11.7Z" fill="#AFB1B3"/></svg>
<div style="position:absolute;left:36px;top:914px;width:22px;height:20px;background:#4C5052;border-radius:3px"></div>
<svg style="position:absolute;left:40px;top:917px" width="14" height="12" viewBox="0 0 14 12"><path d="M1 1.5H4M1 5.5H4M1 9.5H4M9 0V10M6 7L9 10L12 7" fill="none" stroke="#AFB1B3" stroke-width="1.6"/></svg>
<div style="position:absolute;left:62px;top:832px;width:971px;height:97px;background:#2B2B2B"></div>
<div style="position:absolute;left:62px;top:832px;width:971px;height:97px;overflow:hidden">
<svg style="position:absolute;left:16.799999999999997px;top:-3.8999999999999773px" width="15" height="14" viewBox="0 0 15 14"><path d="M1 0.7L14 13.3M14 0.7L1 13.3" stroke="#B09E42" stroke-width="1.2"/><circle cx="7.5" cy="2.3" r="1.5" fill="#B09E42"/><circle cx="7.5" cy="11.7" r="1.5" fill="#B09E42"/><circle cx="2.3" cy="7" r="1.5" fill="#B09E42"/><circle cx="12.7" cy="7" r="1.5" fill="#B09E42"/></svg>
<svg style="position:absolute;left:16.799999999999997px;top:27.299999999999955px" width="15" height="14" viewBox="0 0 15 14"><path d="M1 0.7L14 13.3M14 0.7L1 13.3" stroke="#B09E42" stroke-width="1.2"/><circle cx="7.5" cy="2.3" r="1.5" fill="#B09E42"/><circle cx="7.5" cy="11.7" r="1.5" fill="#B09E42"/><circle cx="2.3" cy="7" r="1.5" fill="#B09E42"/><circle cx="12.7" cy="7" r="1.5" fill="#B09E42"/></svg>
<svg style="position:absolute;left:34.8px;top:27.299999999999955px" width="15" height="14" viewBox="0 0 15 14"><path d="M1 0.7L14 13.3M14 0.7L1 13.3" stroke="#B09E42" stroke-width="1.2"/><circle cx="7.5" cy="2.3" r="1.5" fill="#B09E42"/><circle cx="7.5" cy="11.7" r="1.5" fill="#B09E42"/><circle cx="2.3" cy="7" r="1.5" fill="#B09E42"/><circle cx="12.7" cy="7" r="1.5" fill="#B09E42"/></svg>
<svg style="position:absolute;left:52.8px;top:27.299999999999955px" width="15" height="14" viewBox="0 0 15 14"><path d="M1 0.7L14 13.3M14 0.7L1 13.3" stroke="#B09E42" stroke-width="1.2"/><circle cx="7.5" cy="2.3" r="1.5" fill="#B09E42"/><circle cx="7.5" cy="11.7" r="1.5" fill="#B09E42"/><circle cx="2.3" cy="7" r="1.5" fill="#B09E42"/><circle cx="12.7" cy="7" r="1.5" fill="#B09E42"/></svg>
<svg style="position:absolute;left:70.8px;top:27.299999999999955px" width="15" height="14" viewBox="0 0 15 14"><path d="M1 0.7L14 13.3M14 0.7L1 13.3" stroke="#B09E42" stroke-width="1.2"/><circle cx="7.5" cy="2.3" r="1.5" fill="#B09E42"/><circle cx="7.5" cy="11.7" r="1.5" fill="#B09E42"/><circle cx="2.3" cy="7" r="1.5" fill="#B09E42"/><circle cx="12.7" cy="7" r="1.5" fill="#B09E42"/></svg>
<svg style="position:absolute;left:88.8px;top:27.299999999999955px" width="15" height="14" viewBox="0 0 15 14"><path d="M1 0.7L14 13.3M14 0.7L1 13.3" stroke="#B09E42" stroke-width="1.2"/><circle cx="7.5" cy="2.3" r="1.5" fill="#B09E42"/><circle cx="7.5" cy="11.7" r="1.5" fill="#B09E42"/><circle cx="2.3" cy="7" r="1.5" fill="#B09E42"/><circle cx="12.7" cy="7" r="1.5" fill="#B09E42"/></svg>
<svg style="position:absolute;left:106.8px;top:27.299999999999955px" width="15" height="14" viewBox="0 0 15 14"><path d="M1 0.7L14 13.3M14 0.7L1 13.3" stroke="#B09E42" stroke-width="1.2"/><circle cx="7.5" cy="2.3" r="1.5" fill="#B09E42"/><circle cx="7.5" cy="11.7" r="1.5" fill="#B09E42"/><circle cx="2.3" cy="7" r="1.5" fill="#B09E42"/><circle cx="12.7" cy="7" r="1.5" fill="#B09E42"/></svg>
<svg style="position:absolute;left:124.80000000000001px;top:27.299999999999955px" width="15" height="14" viewBox="0 0 15 14"><path d="M1 0.7L14 13.3M14 0.7L1 13.3" stroke="#B09E42" stroke-width="1.2"/><circle cx="7.5" cy="2.3" r="1.5" fill="#B09E42"/><circle cx="7.5" cy="11.7" r="1.5" fill="#B09E42"/><circle cx="2.3" cy="7" r="1.5" fill="#B09E42"/><circle cx="12.7" cy="7" r="1.5" fill="#B09E42"/></svg>
<svg style="position:absolute;left:142.8px;top:27.299999999999955px" width="15" height="14" viewBox="0 0 15 14"><path d="M1 0.7L14 13.3M14 0.7L1 13.3" stroke="#B09E42" stroke-width="1.2"/><circle cx="7.5" cy="2.3" r="1.5" fill="#B09E42"/><circle cx="7.5" cy="11.7" r="1.5" fill="#B09E42"/><circle cx="2.3" cy="7" r="1.5" fill="#B09E42"/><circle cx="12.7" cy="7" r="1.5" fill="#B09E42"/></svg>
<svg style="position:absolute;left:160.8px;top:27.299999999999955px" width="15" height="14" viewBox="0 0 15 14"><path d="M1 0.7L14 13.3M14 0.7L1 13.3" stroke="#B09E42" stroke-width="1.2"/><circle cx="7.5" cy="2.3" r="1.5" fill="#B09E42"/><circle cx="7.5" cy="11.7" r="1.5" fill="#B09E42"/><circle cx="2.3" cy="7" r="1.5" fill="#B09E42"/><circle cx="12.7" cy="7" r="1.5" fill="#B09E42"/></svg>
<svg style="position:absolute;left:178.8px;top:27.299999999999955px" width="15" height="14" viewBox="0 0 15 14"><path d="M1 0.7L14 13.3M14 0.7L1 13.3" stroke="#B09E42" stroke-width="1.2"/><circle cx="7.5" cy="2.3" r="1.5" fill="#B09E42"/><circle cx="7.5" cy="11.7" r="1.5" fill="#B09E42"/><circle cx="2.3" cy="7" r="1.5" fill="#B09E42"/><circle cx="12.7" cy="7" r="1.5" fill="#B09E42"/></svg>
<svg style="position:absolute;left:196.8px;top:27.299999999999955px" width="15" height="14" viewBox="0 0 15 14"><path d="M1 0.7L14 13.3M14 0.7L1 13.3" stroke="#B09E42" stroke-width="1.2"/><circle cx="7.5" cy="2.3" r="1.5" fill="#B09E42"/><circle cx="7.5" cy="11.7" r="1.5" fill="#B09E42"/><circle cx="2.3" cy="7" r="1.5" fill="#B09E42"/><circle cx="12.7" cy="7" r="1.5" fill="#B09E42"/></svg>
<svg style="position:absolute;left:214.8px;top:27.299999999999955px" width="15" height="14" viewBox="0 0 15 14"><path d="M1 0.7L14 13.3M14 0.7L1 13.3" stroke="#B09E42" stroke-width="1.2"/><circle cx="7.5" cy="2.3" r="1.5" fill="#B09E42"/><circle cx="7.5" cy="11.7" r="1.5" fill="#B09E42"/><circle cx="2.3" cy="7" r="1.5" fill="#B09E42"/><circle cx="12.7" cy="7" r="1.5" fill="#B09E42"/></svg>
<svg style="position:absolute;left:232.8px;top:27.299999999999955px" width="15" height="14" viewBox="0 0 15 14"><path d="M1 0.7L14 13.3M14 0.7L1 13.3" stroke="#B09E42" stroke-width="1.2"/><circle cx="7.5" cy="2.3" r="1.5" fill="#B09E42"/><circle cx="7.5" cy="11.7" r="1.5" fill="#B09E42"/><circle cx="2.3" cy="7" r="1.5" fill="#B09E42"/><circle cx="12.7" cy="7" r="1.5" fill="#B09E42"/></svg>
<svg style="position:absolute;left:250.8px;top:27.299999999999955px" width="15" height="14" viewBox="0 0 15 14"><path d="M1 0.7L14 13.3M14 0.7L1 13.3" stroke="#B09E42" stroke-width="1.2"/><circle cx="7.5" cy="2.3" r="1.5" fill="#B09E42"/><circle cx="7.5" cy="11.7" r="1.5" fill="#B09E42"/><circle cx="2.3" cy="7" r="1.5" fill="#B09E42"/><circle cx="12.7" cy="7" r="1.5" fill="#B09E42"/></svg>
<svg style="position:absolute;left:268.8px;top:27.299999999999955px" width="15" height="14" viewBox="0 0 15 14"><path d="M1 0.7L14 13.3M14 0.7L1 13.3" stroke="#B09E42" stroke-width="1.2"/><circle cx="7.5" cy="2.3" r="1.5" fill="#B09E42"/><circle cx="7.5" cy="11.7" r="1.5" fill="#B09E42"/><circle cx="2.3" cy="7" r="1.5" fill="#B09E42"/><circle cx="12.7" cy="7" r="1.5" fill="#B09E42"/></svg>
<svg style="position:absolute;left:286.8px;top:27.299999999999955px" width="15" height="14" viewBox="0 0 15 14"><path d="M1 0.7L14 13.3M14 0.7L1 13.3" stroke="#B09E42" stroke-width="1.2"/><circle cx="7.5" cy="2.3" r="1.5" fill="#B09E42"/><circle cx="7.5" cy="11.7" r="1.5" fill="#B09E42"/><circle cx="2.3" cy="7" r="1.5" fill="#B09E42"/><circle cx="12.7" cy="7" r="1.5" fill="#B09E42"/></svg>
<svg style="position:absolute;left:304.8px;top:27.299999999999955px" width="15" height="14" viewBox="0 0 15 14"><path d="M1 0.7L14 13.3M14 0.7L1 13.3" stroke="#B09E42" stroke-width="1.2"/><circle cx="7.5" cy="2.3" r="1.5" fill="#B09E42"/><circle cx="7.5" cy="11.7" r="1.5" fill="#B09E42"/><circle cx="2.3" cy="7" r="1.5" fill="#B09E42"/><circle cx="12.7" cy="7" r="1.5" fill="#B09E42"/></svg>
<svg style="position:absolute;left:322.8px;top:27.299999999999955px" width="15" height="14" viewBox="0 0 15 14"><path d="M1 0.7L14 13.3M14 0.7L1 13.3" stroke="#B09E42" stroke-width="1.2"/><circle cx="7.5" cy="2.3" r="1.5" fill="#B09E42"/><circle cx="7.5" cy="11.7" r="1.5" fill="#B09E42"/><circle cx="2.3" cy="7" r="1.5" fill="#B09E42"/><circle cx="12.7" cy="7" r="1.5" fill="#B09E42"/></svg>
<svg style="position:absolute;left:340.8px;top:27.299999999999955px" width="15" height="14" viewBox="0 0 15 14"><path d="M1 0.7L14 13.3M14 0.7L1 13.3" stroke="#B09E42" stroke-width="1.2"/><circle cx="7.5" cy="2.3" r="1.5" fill="#B09E42"/><circle cx="7.5" cy="11.7" r="1.5" fill="#B09E42"/><circle cx="2.3" cy="7" r="1.5" fill="#B09E42"/><circle cx="12.7" cy="7" r="1.5" fill="#B09E42"/></svg>
<svg style="position:absolute;left:358.8px;top:27.299999999999955px" width="15" height="14" viewBox="0 0 15 14"><path d="M1 0.7L14 13.3M14 0.7L1 13.3" stroke="#B09E42" stroke-width="1.2"/><circle cx="7.5" cy="2.3" r="1.5" fill="#B09E42"/><circle cx="7.5" cy="11.7" r="1.5" fill="#B09E42"/><circle cx="2.3" cy="7" r="1.5" fill="#B09E42"/><circle cx="12.7" cy="7" r="1.5" fill="#B09E42"/></svg>
<svg style="position:absolute;left:376.8px;top:27.299999999999955px" width="15" height="14" viewBox="0 0 15 14"><path d="M1 0.7L14 13.3M14 0.7L1 13.3" stroke="#B09E42" stroke-width="1.2"/><circle cx="7.5" cy="2.3" r="1.5" fill="#B09E42"/><circle cx="7.5" cy="11.7" r="1.5" fill="#B09E42"/><circle cx="2.3" cy="7" r="1.5" fill="#B09E42"/><circle cx="12.7" cy="7" r="1.5" fill="#B09E42"/></svg>
<svg style="position:absolute;left:394.8px;top:27.299999999999955px" width="15" height="14" viewBox="0 0 15 14"><path d="M1 0.7L14 13.3M14 0.7L1 13.3" stroke="#B09E42" stroke-width="1.2"/><circle cx="7.5" cy="2.3" r="1.5" fill="#B09E42"/><circle cx="7.5" cy="11.7" r="1.5" fill="#B09E42"/><circle cx="2.3" cy="7" r="1.5" fill="#B09E42"/><circle cx="12.7" cy="7" r="1.5" fill="#B09E42"/></svg>
<svg style="position:absolute;left:412.8px;top:27.299999999999955px" width="15" height="14" viewBox="0 0 15 14"><path d="M1 0.7L14 13.3M14 0.7L1 13.3" stroke="#B09E42" stroke-width="1.2"/><circle cx="7.5" cy="2.3" r="1.5" fill="#B09E42"/><circle cx="7.5" cy="11.7" r="1.5" fill="#B09E42"/><circle cx="2.3" cy="7" r="1.5" fill="#B09E42"/><circle cx="12.7" cy="7" r="1.5" fill="#B09E42"/></svg>
<svg style="position:absolute;left:430.8px;top:27.299999999999955px" width="15" height="14" viewBox="0 0 15 14"><path d="M1 0.7L14 13.3M14 0.7L1 13.3" stroke="#B09E42" stroke-width="1.2"/><circle cx="7.5" cy="2.3" r="1.5" fill="#B09E42"/><circle cx="7.5" cy="11.7" r="1.5" fill="#B09E42"/><circle cx="2.3" cy="7" r="1.5" fill="#B09E42"/><circle cx="12.7" cy="7" r="1.5" fill="#B09E42"/></svg>
<svg style="position:absolute;left:448.8px;top:27.299999999999955px" width="15" height="14" viewBox="0 0 15 14"><path d="M1 0.7L14 13.3M14 0.7L1 13.3" stroke="#B09E42" stroke-width="1.2"/><circle cx="7.5" cy="2.3" r="1.5" fill="#B09E42"/><circle cx="7.5" cy="11.7" r="1.5" fill="#B09E42"/><circle cx="2.3" cy="7" r="1.5" fill="#B09E42"/><circle cx="12.7" cy="7" r="1.5" fill="#B09E42"/></svg>
<svg style="position:absolute;left:466.8px;top:27.299999999999955px" width="15" height="14" viewBox="0 0 15 14"><path d="M1 0.7L14 13.3M14 0.7L1 13.3" stroke="#B09E42" stroke-width="1.2"/><circle cx="7.5" cy="2.3" r="1.5" fill="#B09E42"/><circle cx="7.5" cy="11.7" r="1.5" fill="#B09E42"/><circle cx="2.3" cy="7" r="1.5" fill="#B09E42"/><circle cx="12.7" cy="7" r="1.5" fill="#B09E42"/></svg>
<svg style="position:absolute;left:484.8px;top:27.299999999999955px" width="15" height="14" viewBox="0 0 15 14"><path d="M1 0.7L14 13.3M14 0.7L1 13.3" stroke="#B09E42" stroke-width="1.2"/><circle cx="7.5" cy="2.3" r="1.5" fill="#B09E42"/><circle cx="7.5" cy="11.7" r="1.5" fill="#B09E42"/><circle cx="2.3" cy="7" r="1.5" fill="#B09E42"/><circle cx="12.7" cy="7" r="1.5" fill="#B09E42"/></svg>
<svg style="position:absolute;left:502.8px;top:27.299999999999955px" width="15" height="14" viewBox="0 0 15 14"><path d="M1 0.7L14 13.3M14 0.7L1 13.3" stroke="#B09E42" stroke-width="1.2"/><circle cx="7.5" cy="2.3" r="1.5" fill="#B09E42"/><circle cx="7.5" cy="11.7" r="1.5" fill="#B09E42"/><circle cx="2.3" cy="7" r="1.5" fill="#B09E42"/><circle cx="12.7" cy="7" r="1.5" fill="#B09E42"/></svg>
<svg style="position:absolute;left:520.8px;top:27.299999999999955px" width="15" height="14" viewBox="0 0 15 14"><path d="M1 0.7L14 13.3M14 0.7L1 13.3" stroke="#B09E42" stroke-width="1.2"/><circle cx="7.5" cy="2.3" r="1.5" fill="#B09E42"/><circle cx="7.5" cy="11.7" r="1.5" fill="#B09E42"/><circle cx="2.3" cy="7" r="1.5" fill="#B09E42"/><circle cx="12.7" cy="7" r="1.5" fill="#B09E42"/></svg>
<svg style="position:absolute;left:538.8px;top:27.299999999999955px" width="15" height="14" viewBox="0 0 15 14"><path d="M1 0.7L14 13.3M14 0.7L1 13.3" stroke="#B09E42" stroke-width="1.2"/><circle cx="7.5" cy="2.3" r="1.5" fill="#B09E42"/><circle cx="7.5" cy="11.7" r="1.5" fill="#B09E42"/><circle cx="2.3" cy="7" r="1.5" fill="#B09E42"/><circle cx="12.7" cy="7" r="1.5" fill="#B09E42"/></svg>
<svg style="position:absolute;left:556.8px;top:27.299999999999955px" width="15" height="14" viewBox="0 0 15 14"><path d="M1 0.7L14 13.3M14 0.7L1 13.3" stroke="#B09E42" stroke-width="1.2"/><circle cx="7.5" cy="2.3" r="1.5" fill="#B09E42"/><circle cx="7.5" cy="11.7" r="1.5" fill="#B09E42"/><circle cx="2.3" cy="7" r="1.5" fill="#B09E42"/><circle cx="12.7" cy="7" r="1.5" fill="#B09E42"/></svg>
<svg style="position:absolute;left:574.8px;top:27.299999999999955px" width="15" height="14" viewBox="0 0 15 14"><path d="M1 0.7L14 13.3M14 0.7L1 13.3" stroke="#B09E42" stroke-width="1.2"/><circle cx="7.5" cy="2.3" r="1.5" fill="#B09E42"/><circle cx="7.5" cy="11.7" r="1.5" fill="#B09E42"/><circle cx="2.3" cy="7" r="1.5" fill="#B09E42"/><circle cx="12.7" cy="7" r="1.5" fill="#B09E42"/></svg>
<svg style="position:absolute;left:592.8px;top:27.299999999999955px" width="15" height="14" viewBox="0 0 15 14"><path d="M1 0.7L14 13.3M14 0.7L1 13.3" stroke="#B09E42" stroke-width="1.2"/><circle cx="7.5" cy="2.3" r="1.5" fill="#B09E42"/><circle cx="7.5" cy="11.7" r="1.5" fill="#B09E42"/><circle cx="2.3" cy="7" r="1.5" fill="#B09E42"/><circle cx="12.7" cy="7" r="1.5" fill="#B09E42"/></svg>
<svg style="position:absolute;left:610.8px;top:27.299999999999955px" width="15" height="14" viewBox="0 0 15 14"><path d="M1 0.7L14 13.3M14 0.7L1 13.3" stroke="#B09E42" stroke-width="1.2"/><circle cx="7.5" cy="2.3" r="1.5" fill="#B09E42"/><circle cx="7.5" cy="11.7" r="1.5" fill="#B09E42"/><circle cx="2.3" cy="7" r="1.5" fill="#B09E42"/><circle cx="12.7" cy="7" r="1.5" fill="#B09E42"/></svg>
<svg style="position:absolute;left:628.8px;top:27.299999999999955px" width="15" height="14" viewBox="0 0 15 14"><path d="M1 0.7L14 13.3M14 0.7L1 13.3" stroke="#B09E42" stroke-width="1.2"/><circle cx="7.5" cy="2.3" r="1.5" fill="#B09E42"/><circle cx="7.5" cy="11.7" r="1.5" fill="#B09E42"/><circle cx="2.3" cy="7" r="1.5" fill="#B09E42"/><circle cx="12.7" cy="7" r="1.5" fill="#B09E42"/></svg>
<svg style="position:absolute;left:646.8px;top:27.299999999999955px" width="15" height="14" viewBox="0 0 15 14"><path d="M1 0.7L14 13.3M14 0.7L1 13.3" stroke="#B09E42" stroke-width="1.2"/><circle cx="7.5" cy="2.3" r="1.5" fill="#B09E42"/><circle cx="7.5" cy="11.7" r="1.5" fill="#B09E42"/><circle cx="2.3" cy="7" r="1.5" fill="#B09E42"/><circle cx="12.7" cy="7" r="1.5" fill="#B09E42"/></svg>
<svg style="position:absolute;left:664.8px;top:27.299999999999955px" width="15" height="14" viewBox="0 0 15 14"><path d="M1 0.7L14 13.3M14 0.7L1 13.3" stroke="#B09E42" stroke-width="1.2"/><circle cx="7.5" cy="2.3" r="1.5" fill="#B09E42"/><circle cx="7.5" cy="11.7" r="1.5" fill="#B09E42"/><circle cx="2.3" cy="7" r="1.5" fill="#B09E42"/><circle cx="12.7" cy="7" r="1.5" fill="#B09E42"/></svg>
<svg style="position:absolute;left:682.8px;top:27.299999999999955px" width="15" height="14" viewBox="0 0 15 14"><path d="M1 0.7L14 13.3M14 0.7L1 13.3" stroke="#B09E42" stroke-width="1.2"/><circle cx="7.5" cy="2.3" r="1.5" fill="#B09E42"/><circle cx="7.5" cy="11.7" r="1.5" fill="#B09E42"/><circle cx="2.3" cy="7" r="1.5" fill="#B09E42"/><circle cx="12.7" cy="7" r="1.5" fill="#B09E42"/></svg>
<svg style="position:absolute;left:700.8px;top:27.299999999999955px" width="15" height="14" viewBox="0 0 15 14"><path d="M1 0.7L14 13.3M14 0.7L1 13.3" stroke="#B09E42" stroke-width="1.2"/><circle cx="7.5" cy="2.3" r="1.5" fill="#B09E42"/><circle cx="7.5" cy="11.7" r="1.5" fill="#B09E42"/><circle cx="2.3" cy="7" r="1.5" fill="#B09E42"/><circle cx="12.7" cy="7" r="1.5" fill="#B09E42"/></svg>
<svg style="position:absolute;left:718.8px;top:27.299999999999955px" width="15" height="14" viewBox="0 0 15 14"><path d="M1 0.7L14 13.3M14 0.7L1 13.3" stroke="#B09E42" stroke-width="1.2"/><circle cx="7.5" cy="2.3" r="1.5" fill="#B09E42"/><circle cx="7.5" cy="11.7" r="1.5" fill="#B09E42"/><circle cx="2.3" cy="7" r="1.5" fill="#B09E42"/><circle cx="12.7" cy="7" r="1.5" fill="#B09E42"/></svg>
<svg style="position:absolute;left:736.8px;top:27.299999999999955px" width="15" height="14" viewBox="0 0 15 14"><path d="M1 0.7L14 13.3M14 0.7L1 13.3" stroke="#B09E42" stroke-width="1.2"/><circle cx="7.5" cy="2.3" r="1.5" fill="#B09E42"/><circle cx="7.5" cy="11.7" r="1.5" fill="#B09E42"/><circle cx="2.3" cy="7" r="1.5" fill="#B09E42"/><circle cx="12.7" cy="7" r="1.5" fill="#B09E42"/></svg>
<svg style="position:absolute;left:754.8px;top:27.299999999999955px" width="15" height="14" viewBox="0 0 15 14"><path d="M1 0.7L14 13.3M14 0.7L1 13.3" stroke="#B09E42" stroke-width="1.2"/><circle cx="7.5" cy="2.3" r="1.5" fill="#B09E42"/><circle cx="7.5" cy="11.7" r="1.5" fill="#B09E42"/><circle cx="2.3" cy="7" r="1.5" fill="#B09E42"/><circle cx="12.7" cy="7" r="1.5" fill="#B09E42"/></svg>
<svg style="position:absolute;left:772.8px;top:27.299999999999955px" width="15" height="14" viewBox="0 0 15 14"><path d="M1 0.7L14 13.3M14 0.7L1 13.3" stroke="#B09E42" stroke-width="1.2"/><circle cx="7.5" cy="2.3" r="1.5" fill="#B09E42"/><circle cx="7.5" cy="11.7" r="1.5" fill="#B09E42"/><circle cx="2.3" cy="7" r="1.5" fill="#B09E42"/><circle cx="12.7" cy="7" r="1.5" fill="#B09E42"/></svg>
<svg style="position:absolute;left:790.8px;top:27.299999999999955px" width="15" height="14" viewBox="0 0 15 14"><path d="M1 0.7L14 13.3M14 0.7L1 13.3" stroke="#B09E42" stroke-width="1.2"/><circle cx="7.5" cy="2.3" r="1.5" fill="#B09E42"/><circle cx="7.5" cy="11.7" r="1.5" fill="#B09E42"/><circle cx="2.3" cy="7" r="1.5" fill="#B09E42"/><circle cx="12.7" cy="7" r="1.5" fill="#B09E42"/></svg>
<svg style="position:absolute;left:808.8px;top:27.299999999999955px" width="15" height="14" viewBox="0 0 15 14"><path d="M1 0.7L14 13.3M14 0.7L1 13.3" stroke="#B09E42" stroke-width="1.2"/><circle cx="7.5" cy="2.3" r="1.5" fill="#B09E42"/><circle cx="7.5" cy="11.7" r="1.5" fill="#B09E42"/><circle cx="2.3" cy="7" r="1.5" fill="#B09E42"/><circle cx="12.7" cy="7" r="1.5" fill="#B09E42"/></svg>
<svg style="position:absolute;left:826.8px;top:27.299999999999955px" width="15" height="14" viewBox="0 0 15 14"><path d="M1 0.7L14 13.3M14 0.7L1 13.3" stroke="#B09E42" stroke-width="1.2"/><circle cx="7.5" cy="2.3" r="1.5" fill="#B09E42"/><circle cx="7.5" cy="11.7" r="1.5" fill="#B09E42"/><circle cx="2.3" cy="7" r="1.5" fill="#B09E42"/><circle cx="12.7" cy="7" r="1.5" fill="#B09E42"/></svg>
<svg style="position:absolute;left:844.8px;top:27.299999999999955px" width="15" height="14" viewBox="0 0 15 14"><path d="M1 0.7L14 13.3M14 0.7L1 13.3" stroke="#B09E42" stroke-width="1.2"/><circle cx="7.5" cy="2.3" r="1.5" fill="#B09E42"/><circle cx="7.5" cy="11.7" r="1.5" fill="#B09E42"/><circle cx="2.3" cy="7" r="1.5" fill="#B09E42"/><circle cx="12.7" cy="7" r="1.5" fill="#B09E42"/></svg>
<svg style="position:absolute;left:862.8px;top:27.299999999999955px" width="15" height="14" viewBox="0 0 15 14"><path d="M1 0.7L14 13.3M14 0.7L1 13.3" stroke="#B09E42" stroke-width="1.2"/><circle cx="7.5" cy="2.3" r="1.5" fill="#B09E42"/><circle cx="7.5" cy="11.7" r="1.5" fill="#B09E42"/><circle cx="2.3" cy="7" r="1.5" fill="#B09E42"/><circle cx="12.7" cy="7" r="1.5" fill="#B09E42"/></svg>
<svg style="position:absolute;left:880.8px;top:27.299999999999955px" width="15" height="14" viewBox="0 0 15 14"><path d="M1 0.7L14 13.3M14 0.7L1 13.3" stroke="#B09E42" stroke-width="1.2"/><circle cx="7.5" cy="2.3" r="1.5" fill="#B09E42"/><circle cx="7.5" cy="11.7" r="1.5" fill="#B09E42"/><circle cx="2.3" cy="7" r="1.5" fill="#B09E42"/><circle cx="12.7" cy="7" r="1.5" fill="#B09E42"/></svg>
<svg style="position:absolute;left:898.8px;top:27.299999999999955px" width="15" height="14" viewBox="0 0 15 14"><path d="M1 0.7L14 13.3M14 0.7L1 13.3" stroke="#B09E42" stroke-width="1.2"/><circle cx="7.5" cy="2.3" r="1.5" fill="#B09E42"/><circle cx="7.5" cy="11.7" r="1.5" fill="#B09E42"/><circle cx="2.3" cy="7" r="1.5" fill="#B09E42"/><circle cx="12.7" cy="7" r="1.5" fill="#B09E42"/></svg>
<svg style="position:absolute;left:916.8px;top:27.299999999999955px" width="15" height="14" viewBox="0 0 15 14"><path d="M1 0.7L14 13.3M14 0.7L1 13.3" stroke="#B09E42" stroke-width="1.2"/><circle cx="7.5" cy="2.3" r="1.5" fill="#B09E42"/><circle cx="7.5" cy="11.7" r="1.5" fill="#B09E42"/><circle cx="2.3" cy="7" r="1.5" fill="#B09E42"/><circle cx="12.7" cy="7" r="1.5" fill="#B09E42"/></svg>
<svg style="position:absolute;left:934.8px;top:27.299999999999955px" width="15" height="14" viewBox="0 0 15 14"><path d="M1 0.7L14 13.3M14 0.7L1 13.3" stroke="#B09E42" stroke-width="1.2"/><circle cx="7.5" cy="2.3" r="1.5" fill="#B09E42"/><circle cx="7.5" cy="11.7" r="1.5" fill="#B09E42"/><circle cx="2.3" cy="7" r="1.5" fill="#B09E42"/><circle cx="12.7" cy="7" r="1.5" fill="#B09E42"/></svg>
<svg style="position:absolute;left:952.8px;top:27.299999999999955px" width="15" height="14" viewBox="0 0 15 14"><path d="M1 0.7L14 13.3M14 0.7L1 13.3" stroke="#B09E42" stroke-width="1.2"/><circle cx="7.5" cy="2.3" r="1.5" fill="#B09E42"/><circle cx="7.5" cy="11.7" r="1.5" fill="#B09E42"/><circle cx="2.3" cy="7" r="1.5" fill="#B09E42"/><circle cx="12.7" cy="7" r="1.5" fill="#B09E42"/></svg>
<div class="code" style="left:16px;top:78.8px;color:#BBBBBB">2025-06-20 17:07:19.645  <span style="color:#6A8759">INFO</span> <span style="color:#9876AA">34232</span> --- [ntContainer#2-1] <span style="color:#299999">c.k.f.c.p.listener.InterfaceListener</span></div>
</div>
<!-- annotations -->
<div style="position:absolute;left:127.5px;top:252px;width:294px;height:251.5px;border:3.5px solid #E0291F;border-radius:4px"></div>
<div style="position:absolute;left:84.5px;top:716.5px;width:297px;height:66.5px;border:3.5px solid #E0291F;border-radius:4px"></div>
<div style="position:absolute;left:101px;top:728px;width:7px;height:7px;border-radius:50%;background:#F81414"></div>
</body></html>
